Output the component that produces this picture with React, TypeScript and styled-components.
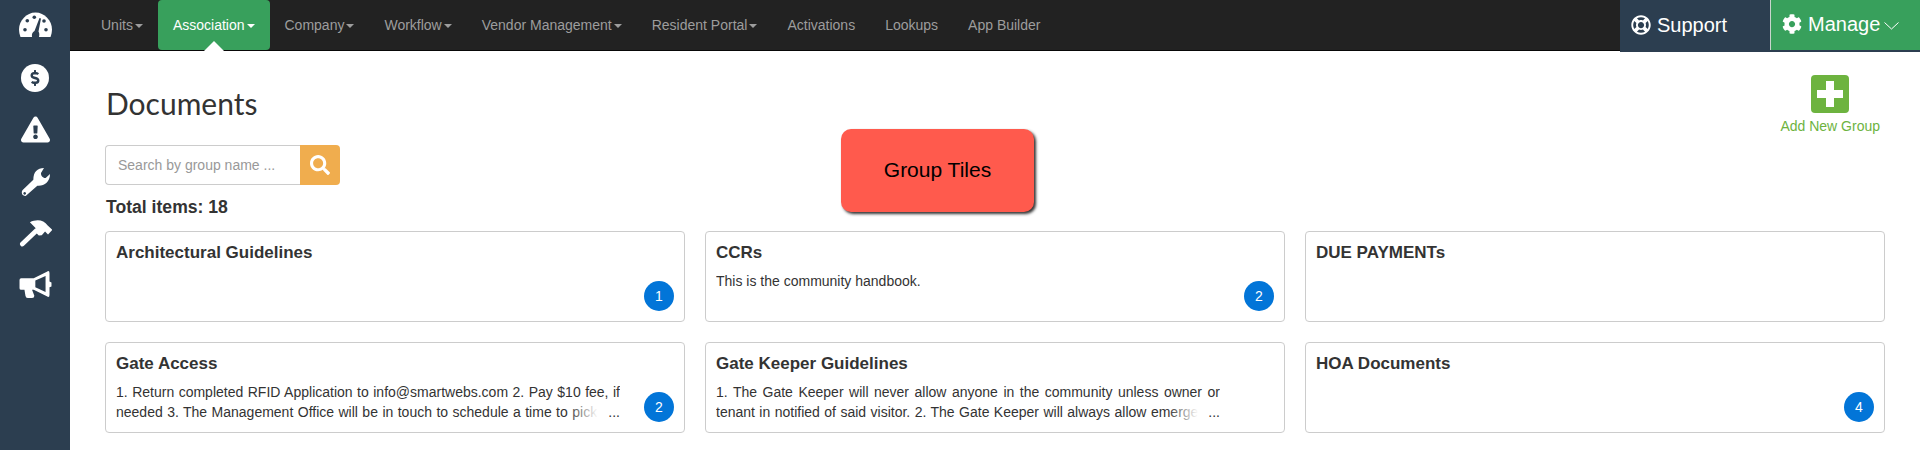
import React from "react";
import styled, { createGlobalStyle } from "styled-components";
import { FaCog, FaDollarSign, FaExclamationTriangle, FaRegLifeRing, FaSearch } from "react-icons/fa";

const NAVY = "#2c3e50";

const Global = createGlobalStyle`
  html, body { margin: 0; padding: 0; height: 450px; overflow: hidden; background: #fff; }
  body { font-family: "Liberation Sans", Arial, sans-serif; font-size: 14px; line-height: 20px; color: #333; }
  * { box-sizing: border-box; }
`;

const Shell = styled.div`display: flex; width: 1920px; height: 450px; overflow: hidden; position: relative;`;
const Sidebar = styled.aside`width: 70px; flex: none; background: ${NAVY}; display: flex; flex-direction: column; align-items: center; color: #fff; padding-top: 12px;`;
const SideIcon = styled.div`height: 51.6px; width: 70px; display: flex; align-items: flex-start; justify-content: center; font-size: 29px; line-height: 1; svg { display: block; }`;
const DollarDisc = styled.div`width: 28px; height: 28px; border-radius: 50%; background: #fff; color: ${NAVY}; display: flex; align-items: center; justify-content: center; font-size: 16px;`;
const Main = styled.main`flex: 1; min-width: 0; display: flex; flex-direction: column;`;
const TopBar = styled.header`height: 52px; display: flex; align-items: flex-start; background: #fff; flex: none;`;
const Nav = styled.nav`flex: 1; height: 51px; background: #222; border-bottom: 1px solid #080808; display: flex; padding-left: 16px;`;
const NavItem = styled.a<{ $active?: boolean }>`
  position: relative; height: 50px; padding: 15px; color: ${p => p.$active ? "#fff" : "#9d9d9d"};
  background: ${p => p.$active ? "#38a05c" : "transparent"}; border-radius: ${p => p.$active ? "4px" : "0"};
  white-space: nowrap; display: flex; align-items: flex-start;
  ${p => p.$active ? `&::after { content: ""; position: absolute; left: 46px; bottom: -1px; border: 10px solid transparent; border-top: 0; border-bottom-color: #fff; }` : ""}
`;
const Caret = styled.span`display: inline-block; width: 0; height: 0; margin: 9px 0 0 2px; border-top: 4px solid currentColor; border-left: 4px solid transparent; border-right: 4px solid transparent;`;
const SupportBox = styled.div`width: 150px; height: 52px; flex: none; background: ${NAVY}; color: #fff; display: flex; align-items: center; padding: 0 0 2px 11px; gap: 6px; font-size: 20px;`;
const ManageWrap = styled.div`width: 150px; height: 52px; flex: none; background: ${NAVY};`;
const ManageBox = styled.div`height: 50px; background: #38a05c; border-left: 1px solid #c8d4cc; color: #fff; display: flex; align-items: center; padding: 0 0 2px 11px; gap: 6px; font-size: 20px;`;
const Chevron = styled.svg`margin: 4px 0 0 -2px; flex: none;`;
const Content = styled.div`flex: 1; padding: 0 35px; position: relative;`;
const HeadRow = styled.div`height: 93px; display: flex; justify-content: space-between; align-items: flex-start;`;
const Title = styled.h1`margin: 31px 0 0 1px; font: 400 30px/40px Lato, "Open Sans", sans-serif; color: #333;`;
const AddGroup = styled.a`display: flex; flex-direction: column; align-items: center; margin: 23px 5px 0 0; color: #6db33f; gap: 3px;`;
const AddIcon = styled.span`width: 38px; height: 38px; border-radius: 4px; background: #6db33f; display: block;`;
const SearchRow = styled.div`display: flex; width: 235px; height: 40px;`;
const SearchField = styled.div`flex: 1; border: 1px solid #ccc; border-right: 0; border-radius: 4px 0 0 4px; padding: 9px 12px; color: #999;`;
const SearchBtn = styled.div`width: 40px; background: #f0ad4e; border-radius: 0 4px 4px 0; color: #fff; display: flex; align-items: center; justify-content: center; font-size: 20px;`;
const Total = styled.div`margin: 11px 0 13px 1px; font-weight: 700; font-size: 17.6px; line-height: 22px; color: #333;`;
const Grid = styled.div`display: grid; grid-template-columns: repeat(3, 580px); gap: 20px;`;
const Card = styled.article`position: relative; height: 91px; border: 1px solid #ccc; border-radius: 4px; padding: 10px;`;
const CardTitle = styled.h3`margin: 0; font-weight: 700; font-size: 17px; line-height: 22px; color: #333;`;
const Desc = styled.div<{ $fade?: boolean }>`
  position: relative; width: 504px; height: 40px; margin-top: 7px; overflow: hidden; font-size: 14px; color: #333; text-align: justify;
  ${p => p.$fade ? `word-spacing: 0.55px; &::after { content: "..."; position: absolute; right: 0; bottom: 0; width: 52px; height: 20px; text-align: right; background: linear-gradient(to right, rgba(255,255,255,0), #fff 58%); }` : ""}
`;
const Count = styled.span`position: absolute; right: 10px; bottom: 10px; width: 30px; height: 30px; border-radius: 50%; background: #0275d8; color: #fff; display: flex; align-items: center; justify-content: center;`;
const Callout = styled.div`position: absolute; left: 841px; top: 129px; width: 193px; height: 83px; padding-bottom: 2px; background: #ff5a4d; border-radius: 10px; box-shadow: 2px 2px 3px #333; color: #000; font-size: 21px; display: flex; align-items: center; justify-content: center;`;

const Gauge = () => (
  <svg width="33" height="25" viewBox="0 0 33 25">
    <path d="M1.5 25C0.5 22.5 0 20 0 17.5C0 8.5 7.5 0.5 16.5 0.5S33 8.5 33 17.5C33 20 32.5 22.5 31.5 25Z" fill="#fff" />
    <circle cx="6" cy="17.7" r="1.8" fill={NAVY} />
    <circle cx="8.3" cy="8.7" r="1.8" fill={NAVY} />
    <circle cx="15.3" cy="5.3" r="1.8" fill={NAVY} />
    <circle cx="25" cy="9" r="1.8" fill={NAVY} />
    <circle cx="27" cy="17.7" r="1.8" fill={NAVY} />
    <path d="M20.5 6L22 6.5L19.5 19.5C20.5 21 20.5 23 20 25H13C12.5 22 13.5 20 15.5 19Z" fill={NAVY} />
  </svg>
);
const Wrench = () => (
  <svg width="33" height="30" viewBox="25 180 99 90">
    <path fillRule="evenodd" fill="#fff" d="M100 183C80 183 68 195 68 218L36 249C31 255 33 267 45 267L80 236C100 238 118 225 118 201L105 213C97 214 90 206 91 198Z M42 255a4 4 0 1 0 .01 0Z" />
  </svg>
);
const Hammer = () => (
  <svg width="33" height="29" viewBox="25 22 100 88">
    <path d="M35 101L78 60" stroke="#fff" strokeWidth="14" strokeLinecap="round" />
    <path fill="#fff" d="M58 35L78 55L72 62L85 75L94 74L104 63L113 72L126 58L112 45C100 27 78 25 58 35Z" />
  </svg>
);
const Horn = () => (
  <svg width="33" height="29" viewBox="26 180 99 88">
    <path fillRule="evenodd" fill="#fff" d="M32 205L70 205L110 185Q118 180 118 190L118 215L124 218L124 230L118 232L118 255Q118 265 110 260L70 240L65 240L72 258Q72 265 65 265L52 265Q46 265 45 258L42 240L32 240Q27 240 27 235L27 210Q27 205 32 205Z M75 212L106 198L106 247L75 232Z" />
  </svg>
);

const navs: [string, boolean, boolean?][] = [["Units", true], ["Association", true, true], ["Company", true], ["Workflow", true], ["Vendor Management", true], ["Resident Portal", true], ["Activations", false], ["Lookups", false], ["App Builder", false]];
const cards = [
  { t: "Architectural Guidelines", n: 1 },
  { t: "CCRs", d: "This is the community handbook.", n: 2 },
  { t: "DUE PAYMENTs" },
  { t: "Gate Access", d: "1. Return completed RFID Application to info@smartwebs.com 2. Pay $10 fee, if needed 3. The Management Office will be in touch to schedule a time to pick", n: 2, f: true },
  { t: "Gate Keeper Guidelines", d: "1. The Gate Keeper will never allow anyone in the community unless owner or tenant in notified of said visitor. 2. The Gate Keeper will always allow emerge", f: true },
  { t: "HOA Documents", n: 4 },
];

export default function App() {
  return (
    <Shell>
      <Global />
      <Sidebar>
        <SideIcon><Gauge /></SideIcon>
        <SideIcon><DollarDisc><FaDollarSign /></DollarDisc></SideIcon>
        <SideIcon><FaExclamationTriangle /></SideIcon>
        <SideIcon><Wrench /></SideIcon>
        <SideIcon><Hammer /></SideIcon>
        <SideIcon><Horn /></SideIcon>
      </Sidebar>
      <Main>
        <TopBar>
          <Nav>
            {navs.map(([label, caret, active]) => (
              <NavItem key={label} $active={active}>{label}{caret && <Caret />}</NavItem>
            ))}
          </Nav>
          <SupportBox><FaRegLifeRing />Support</SupportBox>
          <ManageWrap>
            <ManageBox>
              <FaCog />Manage
              <Chevron width="15" height="8" viewBox="0 0 15 8"><path d="M0.5 0.5L7.5 7L14.5 0.5" fill="none" stroke="#fff" strokeWidth="1" /></Chevron>
            </ManageBox>
          </ManageWrap>
        </TopBar>
        <Content>
          <HeadRow>
            <Title>Documents</Title>
            <AddGroup>
              <AddIcon><svg width="38" height="38" viewBox="0 0 38 38"><path d="M15 6h8v9h9v8h-9v9h-8v-9H6v-8h9z" fill="#fff" /></svg></AddIcon>
              Add New Group
            </AddGroup>
          </HeadRow>
          <SearchRow>
            <SearchField>Search by group name ...</SearchField>
            <SearchBtn><FaSearch /></SearchBtn>
          </SearchRow>
          <Total>Total items: 18</Total>
          <Grid>
            {cards.map(c => (
              <Card key={c.t}>
                <CardTitle>{c.t}</CardTitle>
                {c.d && <Desc $fade={c.f}>{c.d}</Desc>}
                {c.n && <Count>{c.n}</Count>}
              </Card>
            ))}
          </Grid>
        </Content>
      </Main>
      <Callout>Group Tiles</Callout>
    </Shell>
  );
}
